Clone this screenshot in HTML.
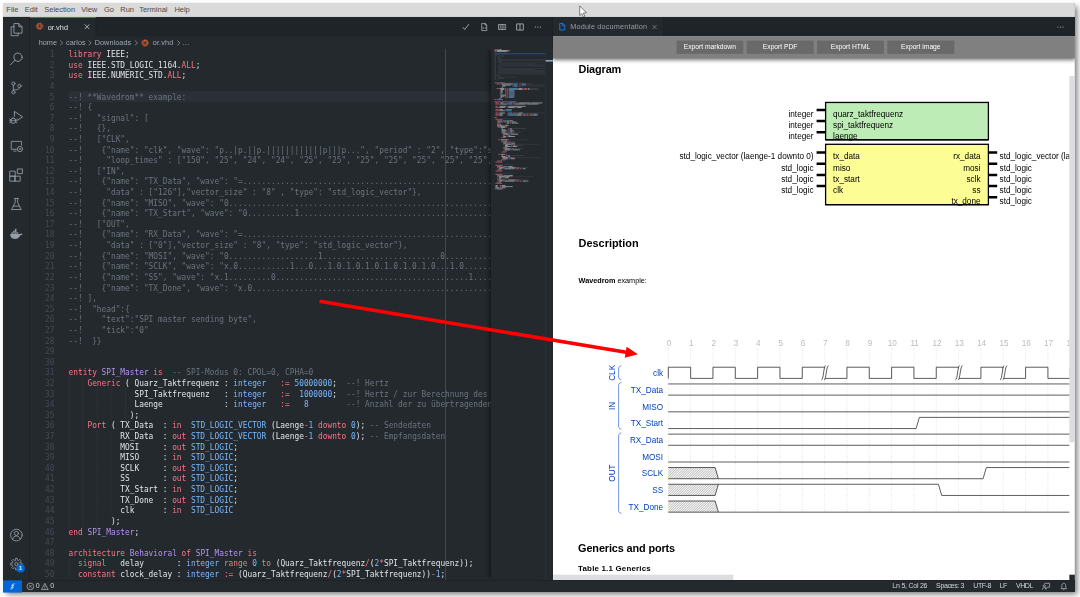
<!DOCTYPE html>
<html lang="en">
<head>
<meta charset="utf-8">
<title>or.vhd - Visual Studio Code</title>
<style>
html,body{margin:0;padding:0;background:#fff;}
body{width:1080px;height:597px;overflow:hidden;position:relative;font-family:"Liberation Sans","DejaVu Sans",sans-serif;}
#win{position:absolute;left:3px;top:3px;width:1920px;height:1054.5px;transform:scale(.5583);transform-origin:0 0;background:#24292e;box-shadow:5px 5px 10px 0 rgba(0,0,0,.5);font-size:13px;color:#d1d5da;}
#win *{box-sizing:border-box;}
.abs{position:absolute;}
.t{white-space:nowrap;line-height:16px;}
#menubar{position:absolute;left:0;top:0;width:1920px;height:25px;background:#dadada;color:#4a4a4a;font-size:13.4px;}
#menubar span{position:absolute;top:4px;line-height:16px;white-space:nowrap;}
#activity{position:absolute;left:0;top:25px;width:48px;height:1008px;background:#24292e;border-right:1px solid #1b1f23;}
#activity svg{position:absolute;left:11px;width:25px;height:25px;overflow:visible;}
#g1{position:absolute;left:48px;top:25px;width:936px;height:1008px;overflow:hidden;}
#g2{position:absolute;left:983.8px;top:25px;width:936.2px;height:1009px;overflow:hidden;border-left:1px solid #1b1f23;}
.tabs{position:absolute;left:0;top:0;width:100%;height:35px;background:#1f2428;}
.tab{position:absolute;top:0;height:35px;background:#24292e;border-right:1px solid #1b1f23;white-space:nowrap;}
#crumbs{position:absolute;left:0;top:35px;width:937px;height:22px;background:#24292e;color:#a0a8b0;font-size:13px;}
#crumbs span{position:absolute;top:3px;line-height:16px;white-space:nowrap;}
#editor{position:absolute;left:0;top:57px;width:937px;height:951px;overflow:hidden;background:#24292e;font-family:"DejaVu Sans Mono","Liberation Mono",monospace;font-size:14px;}
#lines{position:absolute;left:0;top:0;width:825.5px;height:951px;overflow:hidden;}
.ln{position:absolute;left:0;width:937px;height:19px;line-height:19px;white-space:pre;}
.ln.cur{background:linear-gradient(#2b3036,#2b3036) 69.5px 0/900px 19px no-repeat;}
.num{position:absolute;left:0;top:0.8px;width:44.2px;text-align:right;font-weight:normal;color:#424a53;}
.ln.cur .num{color:#444d56;}
.tx{position:absolute;left:69.5px;top:0.8px;height:19px;white-space:pre;}
.ig{position:absolute;top:-0.8px;width:1px;height:19px;background:#30363d;}
#ruler{position:absolute;left:744px;top:0;width:1px;height:951px;background:#5c646d;}
#minimap{position:absolute;left:825.5px;top:0;width:97.5px;height:951px;background:#24292e;box-shadow:-6px 0 6px -3px rgba(0,0,0,.45);}
#vscroll{position:absolute;left:923px;top:0;width:14px;height:951px;background:#24292e;border-left:1px solid #2f363d;}
#status{position:absolute;left:0;top:1034px;width:1920px;height:20.5px;background:#24292e;border-top:1px solid #1b1f23;color:#d1d5da;font-size:12.3px;}
#status span{position:absolute;top:3px;line-height:15px;white-space:nowrap;}
#webview{position:absolute;left:0;top:35px;width:935.2px;height:974px;background:#fff;overflow:hidden;}
#toolbar{position:absolute;left:0;top:0;width:935.2px;height:39px;background:#808080;box-shadow:0 3px 7px rgba(0,0,0,.55);}
#toolbar span{position:absolute;top:7px;width:120px;height:24px;background:#696969;color:#fff;font-size:12px;line-height:24px;text-align:center;white-space:nowrap;}
#ov{position:absolute;left:0;top:0;width:1080px;height:597px;overflow:hidden;pointer-events:none;}
#ov .h{position:absolute;white-space:nowrap;color:#000;font-weight:bold;line-height:1;}
</style>
</head>
<body>
<div id="win">
  <div id="menubar">
    <span style="left:6px">File</span><span style="left:39px">Edit</span><span style="left:74px">Selection</span><span style="left:140px">View</span><span style="left:181px">Go</span><span style="left:210px">Run</span><span style="left:244px">Terminal</span><span style="left:307px">Help</span>
  </div>
  <div id="activity">
<svg viewBox="0 0 24 24" style="left:9.9px;top:8.8px;width:27.5px;height:27.5px" fill="none" stroke="#959da5" stroke-width="1.4" stroke-linejoin="round" stroke-linecap="round"><path d="M9 2.5h7l5 5v10h-12z"/><path d="M16 2.5v5h5"/><path d="M9 7.5h-5v14h11v-4"/></svg>
<svg viewBox="0 0 24 24" style="left:9.6px;top:60.5px;width:28.0px;height:28.0px" fill="none" stroke="#959da5" stroke-width="1.4" stroke-linejoin="round" stroke-linecap="round"><circle cx="14.5" cy="9.5" r="6.3"/><path d="M10 14 2.8 21.2"/></svg>
<svg viewBox="0 0 24 24" style="left:10.6px;top:114.0px;width:26.0px;height:26.0px" fill="none" stroke="#959da5" stroke-width="1.4" stroke-linejoin="round" stroke-linecap="round"><circle cx="7" cy="5" r="2.700"/><circle cx="7" cy="19.300" r="2.700"/><circle cx="17" cy="8.800" r="2.700"/><path d="M7 7.700v8.900"/><path d="M17 11.500c0 3.200-2.500 3.700-10 3.700"/></svg>
<svg viewBox="0 0 24 24" style="left:9.6px;top:165.0px;width:28.0px;height:28.0px" fill="none" stroke="#959da5" stroke-width="1.4" stroke-linejoin="round" stroke-linecap="round"><path d="M9 11V3.500l12.500 8.500-8.500 5.500"/><rect x="3.800" y="14" width="6.800" height="7.800" rx="3"/><path d="M3.800 17.800h6.800M1.500 15.200l2.300 1.300M1.500 21l2.300-1.300M12.900 15.200l-2.300 1.300M12.900 21l-2.300-1.300M1.200 18h2.600M10.600 18h2.600" stroke-width="1.100"/></svg>
<svg viewBox="0 0 24 24" style="left:10.6px;top:218.0px;width:26.0px;height:26.0px" fill="none" stroke="#959da5" stroke-width="1.4" stroke-linejoin="round" stroke-linecap="round"><path d="M12 17.5H3.5v-13h17V11"/><path d="M7.5 20.5h4"/><circle cx="17.8" cy="17.2" r="4.4"/><path d="M16.3 15.7l3 3M19.3 15.7l-3 3" stroke-width="1.1"/></svg>
<svg viewBox="0 0 24 24" style="left:10.1px;top:269.5px;width:27.0px;height:27.0px" fill="none" stroke="#959da5" stroke-width="1.4" stroke-linejoin="round" stroke-linecap="round"><path d="M2.500 5.500h8v8h-8z"/><path d="M2.500 13.500h8v8h-8z"/><path d="M10.500 13.500h8v8h-8z"/><path d="M14.500 2h7.500v7.500h-7.500z"/></svg>
<svg viewBox="0 0 24 24" style="left:10.6px;top:322.0px;width:26.0px;height:26.0px" fill="none" stroke="#959da5" stroke-width="1.4" stroke-linejoin="round" stroke-linecap="round"><path d="M8.5 2.8h7"/><path d="M10 3v6.5l-6 11.7h16L14 9.5V3"/><path d="M6.8 15.5h10.4"/></svg>
<svg viewBox="0 0 24 24" style="top:376.5px" fill="#959da5" stroke="none"><path d="M1.5 11.5h17.2c.9-1 2.6-1.3 4-.4-.5 1.7-2 2.5-3.4 2.5-1.6 4-4.8 6.4-9.8 6.4-4.9 0-7.6-3.1-8-8.5z"/><path d="M4 8.3h2.6v2.6H4zM7 8.3h2.6v2.6H7zM10 8.3h2.6v2.6H10zM13 8.3h2.6v2.6H13zM7 5.3h2.6v2.6H7zM10 5.3h2.6v2.6H10zM10 2.3h2.6v2.6H10z"/></svg>
<svg viewBox="0 0 24 24" style="left:10.6px;top:915.0px;width:26.0px;height:26.0px" fill="none" stroke="#959da5" stroke-width="1.4" stroke-linejoin="round" stroke-linecap="round"><circle cx="12" cy="12" r="9.6"/><circle cx="12" cy="9.3" r="3.4"/><path d="M5.6 19c.8-3.6 3.2-5.4 6.4-5.4s5.6 1.8 6.4 5.4"/></svg>
<svg viewBox="0 0 24 24" style="left:10.6px;top:966.5px;width:26.0px;height:26.0px" fill="none" stroke="#959da5" stroke-width="1.4" stroke-linejoin="round" stroke-linecap="round"><circle cx="12" cy="12" r="2.700"/><path d="M10.41 5.59L10.42 2.53L13.58 2.53L13.59 5.59L15.40 6.35L17.58 4.19L19.81 6.42L17.65 8.60L18.41 10.41L21.47 10.42L21.47 13.58L18.41 13.59L17.65 15.40L19.81 17.58L17.58 19.81L15.40 17.65L13.59 18.41L13.58 21.47L10.42 21.47L10.41 18.41L8.60 17.65L6.42 19.81L4.19 17.58L6.35 15.40L5.59 13.59L2.53 13.58L2.53 10.42L5.59 10.41L6.35 8.60L4.19 6.42L6.42 4.19L8.60 6.35z" stroke-width="1.300"/></svg><div class="abs" style="left:24px;top:980.2px;width:14.5px;height:14.5px;border-radius:7.3px;background:#0366d6;color:#fff;font-size:9px;line-height:14.5px;text-align:center;font-weight:bold">1</div>
  </div>
  <div id="g1">
    <div class="tabs">
      <div class="tab" style="left:0;width:119px;border-top:1px solid #f9826c;color:#e1e4e8">
<svg class="abs" viewBox="0 0 16 16" style="left:10.5px;top:8.5px;width:13px;height:13px;overflow:visible"><circle cx="8" cy="8" r="5.7" fill="none" stroke="#e0653a" stroke-width="2"/><circle cx="8" cy="8" r="7.3" fill="none" stroke="#e0653a" stroke-width="1.5" stroke-dasharray="2 1.82"/><rect x="5.5" y="5.5" width="5" height="5" fill="none" stroke="#e0653a" stroke-width="1.2"/></svg><span class="abs t" style="left:32.0px;top:10.0px;font-size:13.00px;letter-spacing:0.182px;color:#e1e4e8;">or.vhd</span><svg class="abs" viewBox="0 0 10 10" style="left:97.3px;top:11px;width:11px;height:11px" stroke="#e1e4e8" stroke-width="1.15" fill="none"><path d="M1.2 1.2l7.6 7.6M8.8 1.2l-7.6 7.6"/></svg>
      </div>
<svg class="abs" viewBox="0 0 16 16" style="left:773.3px;top:9.5px;width:16px;height:16px" fill="none" stroke="#d1d5da" stroke-width="1.3"><path d="M2.5 8.5l3.5 4 7.5-9.5"/></svg>
<svg class="abs" viewBox="0 0 16 16" style="left:805.5px;top:9.5px;width:16px;height:16px" fill="none" stroke="#d1d5da" stroke-width="1.1"><path d="M3.5 1.5h6l3 3v10h-9z"/><path d="M9.5 1.5v3h3"/><path d="M7 8l-1.6 1.7L7 11.4M9.3 8l1.6 1.7-1.6 1.7" stroke-width="1"/></svg>
<svg class="abs" viewBox="0 0 16 16" style="left:837.8px;top:9.5px;width:16px;height:16px" fill="none" stroke="#d1d5da" stroke-width="1.1"><path d="M1.5 3.5h13v9h-13z"/><path d="M8 3.5v9"/><path d="M3.5 6h2.5M3.5 8h2.5M3.5 10h2.5M10 6h2.5M10 8h2.5M10 10h2.5" stroke-width="1"/></svg>
<svg class="abs" viewBox="0 0 16 16" style="left:870.0px;top:9.5px;width:16px;height:16px" fill="none" stroke="#d1d5da" stroke-width="1.2"><path d="M2 2.5h12v11h-12z"/><path d="M8 2.5v11"/></svg>
<svg class="abs" viewBox="0 0 16 16" style="left:901.7px;top:9.5px;width:16px;height:16px" fill="none" stroke="#d1d5da" stroke-width="1.1"><circle cx="3.5" cy="8" r="1" fill="#d1d5da" stroke="none"/><circle cx="8" cy="8" r="1" fill="#d1d5da" stroke="none"/><circle cx="12.5" cy="8" r="1" fill="#d1d5da" stroke="none"/></svg>
    </div>
    <div id="crumbs">
<span class="abs t" style="left:15.9px;top:3.0px;font-size:13.00px;letter-spacing:0.071px;">home</span>
<svg class="abs" viewBox="0 0 8 12" style="left:52.0px;top:5px;width:9px;height:13px" fill="none" stroke="#a0a8b0" stroke-width="1.1"><path d="M2 2l4.200 4-4.200 4"/></svg>
<span class="abs t" style="left:64.8px;top:3.0px;font-size:13.00px;letter-spacing:0.104px;">carlos</span>
<svg class="abs" viewBox="0 0 8 12" style="left:103.0px;top:5px;width:9px;height:13px" fill="none" stroke="#a0a8b0" stroke-width="1.1"><path d="M2 2l4.200 4-4.200 4"/></svg>
<span class="abs t" style="left:116.2px;top:3.0px;font-size:13.00px;letter-spacing:0.121px;">Downloads</span>
<svg class="abs" viewBox="0 0 8 12" style="left:185.5px;top:5px;width:9px;height:13px" fill="none" stroke="#a0a8b0" stroke-width="1.1"><path d="M2 2l4.200 4-4.200 4"/></svg>
<svg class="abs" viewBox="0 0 16 16" style="left:199.5px;top:4.5px;width:13px;height:13px;overflow:visible"><circle cx="8" cy="8" r="5.7" fill="none" stroke="#e0653a" stroke-width="2"/><circle cx="8" cy="8" r="7.3" fill="none" stroke="#e0653a" stroke-width="1.5" stroke-dasharray="2 1.82"/><rect x="5.5" y="5.5" width="5" height="5" fill="none" stroke="#e0653a" stroke-width="1.2"/></svg>
<span class="abs t" style="left:220.3px;top:3.0px;font-size:13.00px;letter-spacing:0.248px;">or.vhd</span>
<svg class="abs" viewBox="0 0 8 12" style="left:261.5px;top:5px;width:9px;height:13px" fill="none" stroke="#a0a8b0" stroke-width="1.1"><path d="M2 2l4.200 4-4.200 4"/></svg>
<span class="abs t" style="left:273.0px;top:3.0px;font-size:13.00px;">…</span>
    </div>
    <div id="editor">
      <div id="lines">
<div class="ln" style="top:0px"><b class="num">1</b><div class="tx"><span style="color:#f97583">library</span><span style="color:#e1e4e8"> IEEE;</span></div></div>
<div class="ln" style="top:19px"><b class="num">2</b><div class="tx"><span style="color:#f97583">use</span><span style="color:#e1e4e8"> IEEE.STD_LOGIC_1164.</span><span style="color:#f97583">ALL</span><span style="color:#e1e4e8">;</span></div></div>
<div class="ln" style="top:38px"><b class="num">3</b><div class="tx"><span style="color:#f97583">use</span><span style="color:#e1e4e8"> IEEE.NUMERIC_STD.</span><span style="color:#f97583">ALL</span><span style="color:#e1e4e8">;</span></div></div>
<div class="ln" style="top:57px"><b class="num">4</b><div class="tx"></div></div>
<div class="ln cur" style="top:76px"><b class="num">5</b><div class="tx"><span style="color:#6a737d">--! **Wavedrom** example:</span></div></div>
<div class="ln" style="top:95px"><b class="num">6</b><div class="tx"><span style="color:#6a737d">--! {</span></div></div>
<div class="ln" style="top:114px"><b class="num">7</b><div class="tx"><span style="color:#6a737d">--!   "signal": [</span></div></div>
<div class="ln" style="top:133px"><b class="num">8</b><div class="tx"><span style="color:#6a737d">--!   {},</span></div></div>
<div class="ln" style="top:152px"><b class="num">9</b><div class="tx"><span style="color:#6a737d">--!   ["CLK",</span></div></div>
<div class="ln" style="top:171px"><b class="num">10</b><div class="tx"><span style="color:#6a737d">--!    {"name": "clk", "wave": "p..|p.||p.||||||||||||p|||p...", "period" : "2", "type":"std_logic"},</span></div></div>
<div class="ln" style="top:190px"><b class="num">11</b><div class="tx"><span style="color:#6a737d">--!     "loop_times" : ["150", "25", "24", "24", "25", "25", "25", "25", "25", "25", "25", "25", "25"]},</span></div></div>
<div class="ln" style="top:209px"><b class="num">12</b><div class="tx"><span style="color:#6a737d">--!   ["IN",</span></div></div>
<div class="ln" style="top:228px"><b class="num">13</b><div class="tx"><span style="color:#6a737d">--!    {"name": "TX_Data", "wave": "=................................................................................</span></div></div>
<div class="ln" style="top:247px"><b class="num">14</b><div class="tx"><span style="color:#6a737d">--!     "data" : ["126"],"vector_size" : "8" , "type": "std_logic_vector"},</span></div></div>
<div class="ln" style="top:266px"><b class="num">15</b><div class="tx"><span style="color:#6a737d">--!    {"name": "MISO", "wave": "0................................................................................</span></div></div>
<div class="ln" style="top:285px"><b class="num">16</b><div class="tx"><span style="color:#6a737d">--!    {"name": "TX_Start", "wave": "0..........1................................................................................</span></div></div>
<div class="ln" style="top:304px"><b class="num">17</b><div class="tx"><span style="color:#6a737d">--!   ["OUT",</span></div></div>
<div class="ln" style="top:323px"><b class="num">18</b><div class="tx"><span style="color:#6a737d">--!    {"name": "RX_Data", "wave": "=................................................................................</span></div></div>
<div class="ln" style="top:342px"><b class="num">19</b><div class="tx"><span style="color:#6a737d">--!     "data" : ["0"],"vector_size" : "8", "type": "std_logic_vector"},</span></div></div>
<div class="ln" style="top:361px"><b class="num">20</b><div class="tx"><span style="color:#6a737d">--!    {"name": "MOSI", "wave": "0...................1.........................0................................................................................</span></div></div>
<div class="ln" style="top:380px"><b class="num">21</b><div class="tx"><span style="color:#6a737d">--!    {"name": "SCLK", "wave": "x.0...........1...0...1.0.1.0.1.0.1.0.1.0.1.0...1.0................................................................................</span></div></div>
<div class="ln" style="top:399px"><b class="num">22</b><div class="tx"><span style="color:#6a737d">--!    {"name": "SS", "wave": "x.1.........0.........................................1................................................................................</span></div></div>
<div class="ln" style="top:418px"><b class="num">23</b><div class="tx"><span style="color:#6a737d">--!    {"name": "TX_Done", "wave": "x.0................................................................................</span></div></div>
<div class="ln" style="top:437px"><b class="num">24</b><div class="tx"><span style="color:#6a737d">--! ],</span></div></div>
<div class="ln" style="top:456px"><b class="num">25</b><div class="tx"><span style="color:#6a737d">--!  "head":{</span></div></div>
<div class="ln" style="top:475px"><b class="num">26</b><div class="tx"><span style="color:#6a737d">--!    "text":"SPI master sending byte",</span></div></div>
<div class="ln" style="top:494px"><b class="num">27</b><div class="tx"><span style="color:#6a737d">--!    "tick":"0"</span></div></div>
<div class="ln" style="top:513px"><b class="num">28</b><div class="tx"><span style="color:#6a737d">--!  }}</span></div></div>
<div class="ln" style="top:532px"><b class="num">29</b><div class="tx"></div></div>
<div class="ln" style="top:551px"><b class="num">30</b><div class="tx"></div></div>
<div class="ln" style="top:570px"><b class="num">31</b><div class="tx"><span style="color:#f97583">entity</span><span style="color:#b392f0"> SPI_Master </span><span style="color:#f97583">is</span><span style="color:#6a737d">  -- SPI-Modus 0: CPOL=0, CPHA=0</span></div></div>
<div class="ln" style="top:589px"><b class="num">32</b><div class="tx"><i class="ig" style="left:0.00px"></i><i class="ig" style="left:25.29px"></i><span style="color:#f97583">    Generic</span><span style="color:#e1e4e8"> ( Quarz_Taktfrequenz : </span><span style="color:#79b8ff">integer</span><span style="color:#f97583">   := </span><span style="color:#79b8ff">50000000</span><span style="color:#e1e4e8">;</span><span style="color:#6a737d">  --! Hertz</span></div></div>
<div class="ln" style="top:608px"><b class="num">33</b><div class="tx"><i class="ig" style="left:0.00px"></i><i class="ig" style="left:25.29px"></i><i class="ig" style="left:50.58px"></i><i class="ig" style="left:75.87px"></i><i class="ig" style="left:101.16px"></i><span style="color:#e1e4e8">              SPI_Taktfrequenz   : </span><span style="color:#79b8ff">integer</span><span style="color:#f97583">   :=  </span><span style="color:#79b8ff">1000000</span><span style="color:#e1e4e8">;</span><span style="color:#6a737d">  --! Hertz / zur Berechnung des Taktes</span></div></div>
<div class="ln" style="top:627px"><b class="num">34</b><div class="tx"><i class="ig" style="left:0.00px"></i><i class="ig" style="left:25.29px"></i><i class="ig" style="left:50.58px"></i><i class="ig" style="left:75.87px"></i><i class="ig" style="left:101.16px"></i><span style="color:#e1e4e8">              Laenge             : </span><span style="color:#79b8ff">integer</span><span style="color:#f97583">   :=   </span><span style="color:#79b8ff">8</span><span style="color:#6a737d">        --! Anzahl der zu übertragenden Bits</span></div></div>
<div class="ln" style="top:646px"><b class="num">35</b><div class="tx"><i class="ig" style="left:0.00px"></i><i class="ig" style="left:25.29px"></i><i class="ig" style="left:50.58px"></i><i class="ig" style="left:75.87px"></i><i class="ig" style="left:101.16px"></i><span style="color:#e1e4e8">             );</span></div></div>
<div class="ln" style="top:665px"><b class="num">36</b><div class="tx"><i class="ig" style="left:0.00px"></i><i class="ig" style="left:25.29px"></i><span style="color:#f97583">    Port</span><span style="color:#e1e4e8"> ( TX_Data  : </span><span style="color:#f97583">in  </span><span style="color:#79b8ff">STD_LOGIC_VECTOR</span><span style="color:#e1e4e8"> (Laenge</span><span style="color:#f97583">-</span><span style="color:#79b8ff">1</span><span style="color:#f97583"> downto </span><span style="color:#79b8ff">0</span><span style="color:#e1e4e8">);</span><span style="color:#6a737d"> -- Sendedaten</span></div></div>
<div class="ln" style="top:684px"><b class="num">37</b><div class="tx"><i class="ig" style="left:0.00px"></i><i class="ig" style="left:25.29px"></i><i class="ig" style="left:50.58px"></i><i class="ig" style="left:75.87px"></i><span style="color:#e1e4e8">           RX_Data  : </span><span style="color:#f97583">out </span><span style="color:#79b8ff">STD_LOGIC_VECTOR</span><span style="color:#e1e4e8"> (Laenge</span><span style="color:#f97583">-</span><span style="color:#79b8ff">1</span><span style="color:#f97583"> downto </span><span style="color:#79b8ff">0</span><span style="color:#e1e4e8">);</span><span style="color:#6a737d"> -- Empfangsdaten</span></div></div>
<div class="ln" style="top:703px"><b class="num">38</b><div class="tx"><i class="ig" style="left:0.00px"></i><i class="ig" style="left:25.29px"></i><i class="ig" style="left:50.58px"></i><i class="ig" style="left:75.87px"></i><span style="color:#e1e4e8">           MOSI     : </span><span style="color:#f97583">out </span><span style="color:#79b8ff">STD_LOGIC</span><span style="color:#e1e4e8">;</span></div></div>
<div class="ln" style="top:722px"><b class="num">39</b><div class="tx"><i class="ig" style="left:0.00px"></i><i class="ig" style="left:25.29px"></i><i class="ig" style="left:50.58px"></i><i class="ig" style="left:75.87px"></i><span style="color:#e1e4e8">           MISO     : </span><span style="color:#f97583">in  </span><span style="color:#79b8ff">STD_LOGIC</span><span style="color:#e1e4e8">;</span></div></div>
<div class="ln" style="top:741px"><b class="num">40</b><div class="tx"><i class="ig" style="left:0.00px"></i><i class="ig" style="left:25.29px"></i><i class="ig" style="left:50.58px"></i><i class="ig" style="left:75.87px"></i><span style="color:#e1e4e8">           SCLK     : </span><span style="color:#f97583">out </span><span style="color:#79b8ff">STD_LOGIC</span><span style="color:#e1e4e8">;</span></div></div>
<div class="ln" style="top:760px"><b class="num">41</b><div class="tx"><i class="ig" style="left:0.00px"></i><i class="ig" style="left:25.29px"></i><i class="ig" style="left:50.58px"></i><i class="ig" style="left:75.87px"></i><span style="color:#e1e4e8">           SS       : </span><span style="color:#f97583">out </span><span style="color:#79b8ff">STD_LOGIC</span><span style="color:#e1e4e8">;</span></div></div>
<div class="ln" style="top:779px"><b class="num">42</b><div class="tx"><i class="ig" style="left:0.00px"></i><i class="ig" style="left:25.29px"></i><i class="ig" style="left:50.58px"></i><i class="ig" style="left:75.87px"></i><span style="color:#e1e4e8">           TX_Start : </span><span style="color:#f97583">in  </span><span style="color:#79b8ff">STD_LOGIC</span><span style="color:#e1e4e8">;</span></div></div>
<div class="ln" style="top:798px"><b class="num">43</b><div class="tx"><i class="ig" style="left:0.00px"></i><i class="ig" style="left:25.29px"></i><i class="ig" style="left:50.58px"></i><i class="ig" style="left:75.87px"></i><span style="color:#e1e4e8">           TX_Done  : </span><span style="color:#f97583">out </span><span style="color:#79b8ff">STD_LOGIC</span><span style="color:#e1e4e8">;</span></div></div>
<div class="ln" style="top:817px"><b class="num">44</b><div class="tx"><i class="ig" style="left:0.00px"></i><i class="ig" style="left:25.29px"></i><i class="ig" style="left:50.58px"></i><i class="ig" style="left:75.87px"></i><span style="color:#e1e4e8">           clk      : </span><span style="color:#f97583">in  </span><span style="color:#79b8ff">STD_LOGIC</span><span style="color:#e1e4e8"></span></div></div>
<div class="ln" style="top:836px"><b class="num">45</b><div class="tx"><i class="ig" style="left:0.00px"></i><i class="ig" style="left:25.29px"></i><i class="ig" style="left:50.58px"></i><span style="color:#e1e4e8">         );</span></div></div>
<div class="ln" style="top:855px"><b class="num">46</b><div class="tx"><span style="color:#f97583">end</span><span style="color:#b392f0"> SPI_Master</span><span style="color:#e1e4e8">;</span></div></div>
<div class="ln" style="top:874px"><b class="num">47</b><div class="tx"></div></div>
<div class="ln" style="top:893px"><b class="num">48</b><div class="tx"><span style="color:#f97583">architecture</span><span style="color:#b392f0"> Behavioral </span><span style="color:#f97583">of</span><span style="color:#b392f0"> SPI_Master </span><span style="color:#f97583">is</span></div></div>
<div class="ln" style="top:912px"><b class="num">49</b><div class="tx"><i class="ig" style="left:0.00px"></i><span style="color:#f97583">  signal</span><span style="color:#e1e4e8">   delay       : </span><span style="color:#79b8ff">integer</span><span style="color:#f97583"> range </span><span style="color:#79b8ff">0</span><span style="color:#f97583"> to</span><span style="color:#e1e4e8"> (Quarz_Taktfrequenz</span><span style="color:#f97583">/</span><span style="color:#e1e4e8">(</span><span style="color:#79b8ff">2</span><span style="color:#f97583">*</span><span style="color:#e1e4e8">SPI_Taktfrequenz));</span></div></div>
<div class="ln" style="top:931px"><b class="num">50</b><div class="tx"><i class="ig" style="left:0.00px"></i><span style="color:#f97583">  constant</span><span style="color:#e1e4e8"> clock_delay : </span><span style="color:#79b8ff">integer</span><span style="color:#f97583"> := </span><span style="color:#e1e4e8">(Quarz_Taktfrequenz</span><span style="color:#f97583">/</span><span style="color:#e1e4e8">(</span><span style="color:#79b8ff">2</span><span style="color:#f97583">*</span><span style="color:#e1e4e8">SPI_Taktfrequenz))</span><span style="color:#f97583">-</span><span style="color:#79b8ff">1</span><span style="color:#e1e4e8">;</span></div></div>
      </div>
      <div id="ruler"></div>
      <div id="minimap">
<svg class="abs" style="left:6px;top:0;width:91.5px;height:300px" viewBox="0 0 91.5 300">
<rect x="-6" y="8.3" width="97.5" height="1.4" fill="#2a5a8c"/>
<rect x="0" y="0.2" width="7" height="1.6" fill="#f97583" opacity="0.6"/>
<rect x="8" y="0.2" width="5" height="1.6" fill="#e1e4e8" opacity="0.6"/>
<rect x="0" y="2.2" width="3" height="1.6" fill="#f97583" opacity="0.6"/>
<rect x="4" y="2.2" width="20" height="1.6" fill="#e1e4e8" opacity="0.6"/>
<rect x="24" y="2.2" width="3" height="1.6" fill="#f97583" opacity="0.6"/>
<rect x="27" y="2.2" width="1" height="1.6" fill="#e1e4e8" opacity="0.6"/>
<rect x="0" y="4.2" width="3" height="1.6" fill="#f97583" opacity="0.6"/>
<rect x="4" y="4.2" width="17" height="1.6" fill="#e1e4e8" opacity="0.6"/>
<rect x="21" y="4.2" width="3" height="1.6" fill="#f97583" opacity="0.6"/>
<rect x="24" y="4.2" width="1" height="1.6" fill="#e1e4e8" opacity="0.6"/>
<rect x="0" y="8.2" width="25" height="1.6" fill="#6a737d" opacity="0.2"/>
<rect x="0" y="10.2" width="5" height="1.6" fill="#6a737d" opacity="0.32"/>
<rect x="0" y="12.2" width="3" height="1.6" fill="#6a737d" opacity="0.32"/>
<rect x="6" y="12.2" width="11" height="1.6" fill="#6a737d" opacity="0.32"/>
<rect x="0" y="14.2" width="3" height="1.6" fill="#6a737d" opacity="0.32"/>
<rect x="6" y="14.2" width="3" height="1.6" fill="#6a737d" opacity="0.32"/>
<rect x="0" y="16.2" width="3" height="1.6" fill="#6a737d" opacity="0.32"/>
<rect x="6" y="16.2" width="7" height="1.6" fill="#6a737d" opacity="0.32"/>
<rect x="0" y="18.2" width="3" height="1.6" fill="#6a737d" opacity="0.32"/>
<rect x="7" y="18.2" width="84.5" height="1.6" fill="#6a737d" opacity="0.2"/>
<rect x="0" y="20.2" width="3" height="1.6" fill="#6a737d" opacity="0.32"/>
<rect x="8" y="20.2" width="83.5" height="1.6" fill="#6a737d" opacity="0.2"/>
<rect x="0" y="22.2" width="3" height="1.6" fill="#6a737d" opacity="0.32"/>
<rect x="6" y="22.2" width="6" height="1.6" fill="#6a737d" opacity="0.32"/>
<rect x="0" y="24.2" width="3" height="1.6" fill="#6a737d" opacity="0.32"/>
<rect x="7" y="24.2" width="84.5" height="1.6" fill="#6a737d" opacity="0.2"/>
<rect x="0" y="26.2" width="3" height="1.6" fill="#6a737d" opacity="0.32"/>
<rect x="8" y="26.2" width="67" height="1.6" fill="#6a737d" opacity="0.2"/>
<rect x="0" y="28.2" width="3" height="1.6" fill="#6a737d" opacity="0.32"/>
<rect x="7" y="28.2" width="84.5" height="1.6" fill="#6a737d" opacity="0.2"/>
<rect x="0" y="30.2" width="3" height="1.6" fill="#6a737d" opacity="0.32"/>
<rect x="7" y="30.2" width="84.5" height="1.6" fill="#6a737d" opacity="0.2"/>
<rect x="0" y="32.2" width="3" height="1.6" fill="#6a737d" opacity="0.32"/>
<rect x="6" y="32.2" width="7" height="1.6" fill="#6a737d" opacity="0.32"/>
<rect x="0" y="34.2" width="3" height="1.6" fill="#6a737d" opacity="0.32"/>
<rect x="7" y="34.2" width="84.5" height="1.6" fill="#6a737d" opacity="0.2"/>
<rect x="0" y="36.2" width="3" height="1.6" fill="#6a737d" opacity="0.32"/>
<rect x="8" y="36.2" width="64" height="1.6" fill="#6a737d" opacity="0.2"/>
<rect x="0" y="38.2" width="3" height="1.6" fill="#6a737d" opacity="0.32"/>
<rect x="7" y="38.2" width="84.5" height="1.6" fill="#6a737d" opacity="0.2"/>
<rect x="0" y="40.2" width="3" height="1.6" fill="#6a737d" opacity="0.32"/>
<rect x="7" y="40.2" width="84.5" height="1.6" fill="#6a737d" opacity="0.2"/>
<rect x="0" y="42.2" width="3" height="1.6" fill="#6a737d" opacity="0.32"/>
<rect x="7" y="42.2" width="84.5" height="1.6" fill="#6a737d" opacity="0.2"/>
<rect x="0" y="44.2" width="3" height="1.6" fill="#6a737d" opacity="0.32"/>
<rect x="7" y="44.2" width="84.5" height="1.6" fill="#6a737d" opacity="0.2"/>
<rect x="0" y="46.2" width="6" height="1.6" fill="#6a737d" opacity="0.32"/>
<rect x="0" y="48.2" width="3" height="1.6" fill="#6a737d" opacity="0.32"/>
<rect x="5" y="48.2" width="8" height="1.6" fill="#6a737d" opacity="0.32"/>
<rect x="0" y="50.2" width="3" height="1.6" fill="#6a737d" opacity="0.32"/>
<rect x="7" y="50.2" width="33" height="1.6" fill="#6a737d" opacity="0.2"/>
<rect x="0" y="52.2" width="3" height="1.6" fill="#6a737d" opacity="0.32"/>
<rect x="7" y="52.2" width="10" height="1.6" fill="#6a737d" opacity="0.32"/>
<rect x="0" y="54.2" width="3" height="1.6" fill="#6a737d" opacity="0.32"/>
<rect x="5" y="54.2" width="2" height="1.6" fill="#6a737d" opacity="0.32"/>
<rect x="0" y="60.2" width="6" height="1.6" fill="#f97583" opacity="0.6"/>
<rect x="7" y="60.2" width="10" height="1.6" fill="#b392f0" opacity="0.6"/>
<rect x="18" y="60.2" width="2" height="1.6" fill="#f97583" opacity="0.6"/>
<rect x="22" y="60.2" width="30" height="1.6" fill="#6a737d" opacity="0.2"/>
<rect x="4" y="62.2" width="7" height="1.6" fill="#f97583" opacity="0.6"/>
<rect x="12" y="62.2" width="22" height="1.6" fill="#e1e4e8" opacity="0.6"/>
<rect x="35" y="62.2" width="7" height="1.6" fill="#79b8ff" opacity="0.6"/>
<rect x="45" y="62.2" width="2" height="1.6" fill="#f97583" opacity="0.6"/>
<rect x="48" y="62.2" width="8" height="1.6" fill="#79b8ff" opacity="0.6"/>
<rect x="56" y="62.2" width="1" height="1.6" fill="#e1e4e8" opacity="0.6"/>
<rect x="59" y="62.2" width="9" height="1.6" fill="#6a737d" opacity="0.32"/>
<rect x="14" y="64.2" width="16" height="1.6" fill="#e1e4e8" opacity="0.6"/>
<rect x="33" y="64.2" width="1" height="1.6" fill="#e1e4e8" opacity="0.6"/>
<rect x="35" y="64.2" width="7" height="1.6" fill="#79b8ff" opacity="0.6"/>
<rect x="45" y="64.2" width="2" height="1.6" fill="#f97583" opacity="0.6"/>
<rect x="49" y="64.2" width="7" height="1.6" fill="#79b8ff" opacity="0.6"/>
<rect x="56" y="64.2" width="1" height="1.6" fill="#e1e4e8" opacity="0.6"/>
<rect x="59" y="64.2" width="32.5" height="1.6" fill="#6a737d" opacity="0.2"/>
<rect x="14" y="66.2" width="6" height="1.6" fill="#e1e4e8" opacity="0.6"/>
<rect x="33" y="66.2" width="1" height="1.6" fill="#e1e4e8" opacity="0.6"/>
<rect x="35" y="66.2" width="7" height="1.6" fill="#79b8ff" opacity="0.6"/>
<rect x="45" y="66.2" width="2" height="1.6" fill="#f97583" opacity="0.6"/>
<rect x="50" y="66.2" width="1" height="1.6" fill="#79b8ff" opacity="0.6"/>
<rect x="59" y="66.2" width="32.5" height="1.6" fill="#6a737d" opacity="0.2"/>
<rect x="13" y="68.2" width="2" height="1.6" fill="#e1e4e8" opacity="0.6"/>
<rect x="4" y="70.2" width="4" height="1.6" fill="#f97583" opacity="0.6"/>
<rect x="9" y="70.2" width="9" height="1.6" fill="#e1e4e8" opacity="0.6"/>
<rect x="20" y="70.2" width="1" height="1.6" fill="#e1e4e8" opacity="0.6"/>
<rect x="22" y="70.2" width="2" height="1.6" fill="#f97583" opacity="0.6"/>
<rect x="26" y="70.2" width="16" height="1.6" fill="#79b8ff" opacity="0.6"/>
<rect x="43" y="70.2" width="7" height="1.6" fill="#e1e4e8" opacity="0.6"/>
<rect x="50" y="70.2" width="1" height="1.6" fill="#f97583" opacity="0.6"/>
<rect x="51" y="70.2" width="1" height="1.6" fill="#79b8ff" opacity="0.6"/>
<rect x="53" y="70.2" width="6" height="1.6" fill="#f97583" opacity="0.6"/>
<rect x="60" y="70.2" width="1" height="1.6" fill="#79b8ff" opacity="0.6"/>
<rect x="61" y="70.2" width="2" height="1.6" fill="#e1e4e8" opacity="0.6"/>
<rect x="64" y="70.2" width="13" height="1.6" fill="#6a737d" opacity="0.32"/>
<rect x="11" y="72.2" width="7" height="1.6" fill="#e1e4e8" opacity="0.6"/>
<rect x="20" y="72.2" width="1" height="1.6" fill="#e1e4e8" opacity="0.6"/>
<rect x="22" y="72.2" width="3" height="1.6" fill="#f97583" opacity="0.6"/>
<rect x="26" y="72.2" width="16" height="1.6" fill="#79b8ff" opacity="0.6"/>
<rect x="43" y="72.2" width="7" height="1.6" fill="#e1e4e8" opacity="0.6"/>
<rect x="50" y="72.2" width="1" height="1.6" fill="#f97583" opacity="0.6"/>
<rect x="51" y="72.2" width="1" height="1.6" fill="#79b8ff" opacity="0.6"/>
<rect x="53" y="72.2" width="6" height="1.6" fill="#f97583" opacity="0.6"/>
<rect x="60" y="72.2" width="1" height="1.6" fill="#79b8ff" opacity="0.6"/>
<rect x="61" y="72.2" width="2" height="1.6" fill="#e1e4e8" opacity="0.6"/>
<rect x="64" y="72.2" width="16" height="1.6" fill="#6a737d" opacity="0.32"/>
<rect x="11" y="74.2" width="4" height="1.6" fill="#e1e4e8" opacity="0.6"/>
<rect x="20" y="74.2" width="1" height="1.6" fill="#e1e4e8" opacity="0.6"/>
<rect x="22" y="74.2" width="3" height="1.6" fill="#f97583" opacity="0.6"/>
<rect x="26" y="74.2" width="9" height="1.6" fill="#79b8ff" opacity="0.6"/>
<rect x="35" y="74.2" width="1" height="1.6" fill="#e1e4e8" opacity="0.6"/>
<rect x="11" y="76.2" width="4" height="1.6" fill="#e1e4e8" opacity="0.6"/>
<rect x="20" y="76.2" width="1" height="1.6" fill="#e1e4e8" opacity="0.6"/>
<rect x="22" y="76.2" width="2" height="1.6" fill="#f97583" opacity="0.6"/>
<rect x="26" y="76.2" width="9" height="1.6" fill="#79b8ff" opacity="0.6"/>
<rect x="35" y="76.2" width="1" height="1.6" fill="#e1e4e8" opacity="0.6"/>
<rect x="11" y="78.2" width="4" height="1.6" fill="#e1e4e8" opacity="0.6"/>
<rect x="20" y="78.2" width="1" height="1.6" fill="#e1e4e8" opacity="0.6"/>
<rect x="22" y="78.2" width="3" height="1.6" fill="#f97583" opacity="0.6"/>
<rect x="26" y="78.2" width="9" height="1.6" fill="#79b8ff" opacity="0.6"/>
<rect x="35" y="78.2" width="1" height="1.6" fill="#e1e4e8" opacity="0.6"/>
<rect x="11" y="80.2" width="2" height="1.6" fill="#e1e4e8" opacity="0.6"/>
<rect x="20" y="80.2" width="1" height="1.6" fill="#e1e4e8" opacity="0.6"/>
<rect x="22" y="80.2" width="3" height="1.6" fill="#f97583" opacity="0.6"/>
<rect x="26" y="80.2" width="9" height="1.6" fill="#79b8ff" opacity="0.6"/>
<rect x="35" y="80.2" width="1" height="1.6" fill="#e1e4e8" opacity="0.6"/>
<rect x="11" y="82.2" width="10" height="1.6" fill="#e1e4e8" opacity="0.6"/>
<rect x="22" y="82.2" width="2" height="1.6" fill="#f97583" opacity="0.6"/>
<rect x="26" y="82.2" width="9" height="1.6" fill="#79b8ff" opacity="0.6"/>
<rect x="35" y="82.2" width="1" height="1.6" fill="#e1e4e8" opacity="0.6"/>
<rect x="11" y="84.2" width="7" height="1.6" fill="#e1e4e8" opacity="0.6"/>
<rect x="20" y="84.2" width="1" height="1.6" fill="#e1e4e8" opacity="0.6"/>
<rect x="22" y="84.2" width="3" height="1.6" fill="#f97583" opacity="0.6"/>
<rect x="26" y="84.2" width="9" height="1.6" fill="#79b8ff" opacity="0.6"/>
<rect x="35" y="84.2" width="1" height="1.6" fill="#e1e4e8" opacity="0.6"/>
<rect x="11" y="86.2" width="3" height="1.6" fill="#e1e4e8" opacity="0.6"/>
<rect x="20" y="86.2" width="1" height="1.6" fill="#e1e4e8" opacity="0.6"/>
<rect x="22" y="86.2" width="2" height="1.6" fill="#f97583" opacity="0.6"/>
<rect x="26" y="86.2" width="9" height="1.6" fill="#79b8ff" opacity="0.6"/>
<rect x="9" y="88.2" width="2" height="1.6" fill="#e1e4e8" opacity="0.6"/>
<rect x="0" y="90.2" width="3" height="1.6" fill="#f97583" opacity="0.6"/>
<rect x="4" y="90.2" width="10" height="1.6" fill="#b392f0" opacity="0.6"/>
<rect x="14" y="90.2" width="1" height="1.6" fill="#e1e4e8" opacity="0.6"/>
<rect x="0" y="94.2" width="12" height="1.6" fill="#f97583" opacity="0.6"/>
<rect x="13" y="94.2" width="10" height="1.6" fill="#b392f0" opacity="0.6"/>
<rect x="24" y="94.2" width="2" height="1.6" fill="#f97583" opacity="0.6"/>
<rect x="27" y="94.2" width="10" height="1.6" fill="#b392f0" opacity="0.6"/>
<rect x="38" y="94.2" width="2" height="1.6" fill="#f97583" opacity="0.6"/>
<rect x="2" y="96.2" width="6" height="1.6" fill="#f97583" opacity="0.6"/>
<rect x="11" y="96.2" width="5" height="1.6" fill="#e1e4e8" opacity="0.6"/>
<rect x="23" y="96.2" width="1" height="1.6" fill="#e1e4e8" opacity="0.6"/>
<rect x="25" y="96.2" width="7" height="1.6" fill="#79b8ff" opacity="0.6"/>
<rect x="33" y="96.2" width="5" height="1.6" fill="#f97583" opacity="0.6"/>
<rect x="39" y="96.2" width="1" height="1.6" fill="#79b8ff" opacity="0.6"/>
<rect x="41" y="96.2" width="2" height="1.6" fill="#f97583" opacity="0.6"/>
<rect x="44" y="96.2" width="19" height="1.6" fill="#e1e4e8" opacity="0.6"/>
<rect x="63" y="96.2" width="1" height="1.6" fill="#f97583" opacity="0.6"/>
<rect x="64" y="96.2" width="1" height="1.6" fill="#e1e4e8" opacity="0.6"/>
<rect x="65" y="96.2" width="1" height="1.6" fill="#79b8ff" opacity="0.6"/>
<rect x="66" y="96.2" width="1" height="1.6" fill="#f97583" opacity="0.6"/>
<rect x="67" y="96.2" width="19" height="1.6" fill="#e1e4e8" opacity="0.6"/>
<rect x="2" y="98.2" width="8" height="1.6" fill="#f97583" opacity="0.6"/>
<rect x="11" y="98.2" width="13" height="1.6" fill="#e1e4e8" opacity="0.6"/>
<rect x="25" y="98.2" width="7" height="1.6" fill="#79b8ff" opacity="0.6"/>
<rect x="33" y="98.2" width="2" height="1.6" fill="#f97583" opacity="0.6"/>
<rect x="36" y="98.2" width="19" height="1.6" fill="#e1e4e8" opacity="0.6"/>
<rect x="55" y="98.2" width="1" height="1.6" fill="#f97583" opacity="0.6"/>
<rect x="56" y="98.2" width="1" height="1.6" fill="#e1e4e8" opacity="0.6"/>
<rect x="57" y="98.2" width="1" height="1.6" fill="#79b8ff" opacity="0.6"/>
<rect x="58" y="98.2" width="1" height="1.6" fill="#f97583" opacity="0.6"/>
<rect x="59" y="98.2" width="18" height="1.6" fill="#e1e4e8" opacity="0.6"/>
<rect x="77" y="98.2" width="1" height="1.6" fill="#f97583" opacity="0.6"/>
<rect x="78" y="98.2" width="1" height="1.6" fill="#79b8ff" opacity="0.6"/>
<rect x="79" y="98.2" width="1" height="1.6" fill="#e1e4e8" opacity="0.6"/>
<rect x="2" y="102.2" width="4" height="1.6" fill="#f97583" opacity="0.6"/>
<rect x="9" y="102.2" width="12" height="1.6" fill="#e1e4e8" opacity="0.6"/>
<rect x="22" y="102.2" width="2" height="1.6" fill="#f97583" opacity="0.6"/>
<rect x="25" y="102.2" width="31" height="1.6" fill="#e1e4e8" opacity="0.6"/>
<rect x="2" y="104.2" width="6" height="1.6" fill="#f97583" opacity="0.6"/>
<rect x="9" y="104.2" width="10" height="1.6" fill="#e1e4e8" opacity="0.6"/>
<rect x="23" y="104.2" width="1" height="1.6" fill="#f97583" opacity="0.6"/>
<rect x="25" y="104.2" width="12" height="1.6" fill="#e1e4e8" opacity="0.6"/>
<rect x="38" y="104.2" width="2" height="1.6" fill="#f97583" opacity="0.6"/>
<rect x="41" y="104.2" width="8" height="1.6" fill="#e1e4e8" opacity="0.6"/>
<rect x="2" y="108.2" width="6" height="1.6" fill="#f97583" opacity="0.6"/>
<rect x="9" y="108.2" width="6" height="1.6" fill="#e1e4e8" opacity="0.6"/>
<rect x="19" y="108.2" width="1" height="1.6" fill="#f97583" opacity="0.6"/>
<rect x="21" y="108.2" width="9" height="1.6" fill="#79b8ff" opacity="0.6"/>
<rect x="30" y="108.2" width="1" height="1.6" fill="#e1e4e8" opacity="0.6"/>
<rect x="2" y="110.2" width="6" height="1.6" fill="#f97583" opacity="0.6"/>
<rect x="9" y="110.2" width="10" height="1.6" fill="#e1e4e8" opacity="0.6"/>
<rect x="19" y="110.2" width="1" height="1.6" fill="#f97583" opacity="0.6"/>
<rect x="21" y="110.2" width="9" height="1.6" fill="#79b8ff" opacity="0.6"/>
<rect x="30" y="110.2" width="1" height="1.6" fill="#e1e4e8" opacity="0.6"/>
<rect x="2" y="114.2" width="6" height="1.6" fill="#f97583" opacity="0.6"/>
<rect x="9" y="114.2" width="10" height="1.6" fill="#e1e4e8" opacity="0.6"/>
<rect x="23" y="114.2" width="1" height="1.6" fill="#f97583" opacity="0.6"/>
<rect x="25" y="114.2" width="7" height="1.6" fill="#79b8ff" opacity="0.6"/>
<rect x="33" y="114.2" width="5" height="1.6" fill="#f97583" opacity="0.6"/>
<rect x="39" y="114.2" width="1" height="1.6" fill="#79b8ff" opacity="0.6"/>
<rect x="41" y="114.2" width="2" height="1.6" fill="#f97583" opacity="0.6"/>
<rect x="44" y="114.2" width="7" height="1.6" fill="#e1e4e8" opacity="0.6"/>
<rect x="52" y="114.2" width="39.5" height="1.6" fill="#6a737d" opacity="0.2"/>
<rect x="2" y="116.2" width="6" height="1.6" fill="#f97583" opacity="0.6"/>
<rect x="9" y="116.2" width="6" height="1.6" fill="#e1e4e8" opacity="0.6"/>
<rect x="23" y="116.2" width="1" height="1.6" fill="#f97583" opacity="0.6"/>
<rect x="25" y="116.2" width="16" height="1.6" fill="#79b8ff" opacity="0.6"/>
<rect x="41" y="116.2" width="7" height="1.6" fill="#e1e4e8" opacity="0.6"/>
<rect x="48" y="116.2" width="1" height="1.6" fill="#f97583" opacity="0.6"/>
<rect x="49" y="116.2" width="1" height="1.6" fill="#79b8ff" opacity="0.6"/>
<rect x="51" y="116.2" width="6" height="1.6" fill="#f97583" opacity="0.6"/>
<rect x="58" y="116.2" width="1" height="1.6" fill="#79b8ff" opacity="0.6"/>
<rect x="59" y="116.2" width="1" height="1.6" fill="#e1e4e8" opacity="0.6"/>
<rect x="61" y="116.2" width="2" height="1.6" fill="#f97583" opacity="0.6"/>
<rect x="64" y="116.2" width="1" height="1.6" fill="#e1e4e8" opacity="0.6"/>
<rect x="65" y="116.2" width="6" height="1.6" fill="#f97583" opacity="0.6"/>
<rect x="71" y="116.2" width="3" height="1.6" fill="#e1e4e8" opacity="0.6"/>
<rect x="74" y="116.2" width="4" height="1.6" fill="#79b8ff" opacity="0.6"/>
<rect x="2" y="118.2" width="6" height="1.6" fill="#f97583" opacity="0.6"/>
<rect x="9" y="118.2" width="6" height="1.6" fill="#e1e4e8" opacity="0.6"/>
<rect x="23" y="118.2" width="1" height="1.6" fill="#f97583" opacity="0.6"/>
<rect x="25" y="118.2" width="16" height="1.6" fill="#79b8ff" opacity="0.6"/>
<rect x="41" y="118.2" width="7" height="1.6" fill="#e1e4e8" opacity="0.6"/>
<rect x="48" y="118.2" width="1" height="1.6" fill="#f97583" opacity="0.6"/>
<rect x="49" y="118.2" width="1" height="1.6" fill="#79b8ff" opacity="0.6"/>
<rect x="51" y="118.2" width="6" height="1.6" fill="#f97583" opacity="0.6"/>
<rect x="58" y="118.2" width="1" height="1.6" fill="#79b8ff" opacity="0.6"/>
<rect x="59" y="118.2" width="1" height="1.6" fill="#e1e4e8" opacity="0.6"/>
<rect x="61" y="118.2" width="2" height="1.6" fill="#f97583" opacity="0.6"/>
<rect x="64" y="118.2" width="1" height="1.6" fill="#e1e4e8" opacity="0.6"/>
<rect x="65" y="118.2" width="6" height="1.6" fill="#f97583" opacity="0.6"/>
<rect x="71" y="118.2" width="3" height="1.6" fill="#e1e4e8" opacity="0.6"/>
<rect x="74" y="118.2" width="4" height="1.6" fill="#79b8ff" opacity="0.6"/>
<rect x="0" y="122.2" width="5" height="1.6" fill="#f97583" opacity="0.6"/>
<rect x="2" y="124.2" width="26" height="1.6" fill="#6a737d" opacity="0.2"/>
<rect x="2" y="126.2" width="13" height="1.6" fill="#f97583" opacity="0.6"/>
<rect x="5" y="128.2" width="10" height="1.6" fill="#f97583" opacity="0.6"/>
<rect x="16" y="128.2" width="11" height="1.6" fill="#79b8ff" opacity="0.6"/>
<rect x="27" y="128.2" width="6" height="1.6" fill="#e1e4e8" opacity="0.6"/>
<rect x="5" y="130.2" width="2" height="1.6" fill="#f97583" opacity="0.6"/>
<rect x="7" y="130.2" width="6" height="1.6" fill="#e1e4e8" opacity="0.6"/>
<rect x="13" y="130.2" width="1" height="1.6" fill="#f97583" opacity="0.6"/>
<rect x="14" y="130.2" width="1" height="1.6" fill="#79b8ff" opacity="0.6"/>
<rect x="15" y="130.2" width="1" height="1.6" fill="#e1e4e8" opacity="0.6"/>
<rect x="17" y="130.2" width="4" height="1.6" fill="#f97583" opacity="0.6"/>
<rect x="22" y="130.2" width="5" height="1.6" fill="#e1e4e8" opacity="0.6"/>
<rect x="28" y="130.2" width="2" height="1.6" fill="#f97583" opacity="0.6"/>
<rect x="31" y="130.2" width="5" height="1.6" fill="#e1e4e8" opacity="0.6"/>
<rect x="36" y="130.2" width="1" height="1.6" fill="#f97583" opacity="0.6"/>
<rect x="37" y="130.2" width="1" height="1.6" fill="#79b8ff" opacity="0.6"/>
<rect x="38" y="130.2" width="1" height="1.6" fill="#e1e4e8" opacity="0.6"/>
<rect x="5" y="132.2" width="4" height="1.6" fill="#f97583" opacity="0.6"/>
<rect x="22" y="132.2" width="5" height="1.6" fill="#e1e4e8" opacity="0.6"/>
<rect x="28" y="132.2" width="2" height="1.6" fill="#f97583" opacity="0.6"/>
<rect x="31" y="132.2" width="12" height="1.6" fill="#e1e4e8" opacity="0.6"/>
<rect x="5" y="134.2" width="6" height="1.6" fill="#f97583" opacity="0.6"/>
<rect x="11" y="134.2" width="1" height="1.6" fill="#e1e4e8" opacity="0.6"/>
<rect x="5" y="136.2" width="10" height="1.6" fill="#e1e4e8" opacity="0.6"/>
<rect x="16" y="136.2" width="2" height="1.6" fill="#f97583" opacity="0.6"/>
<rect x="19" y="136.2" width="7" height="1.6" fill="#e1e4e8" opacity="0.6"/>
<rect x="5" y="138.2" width="4" height="1.6" fill="#f97583" opacity="0.6"/>
<rect x="10" y="138.2" width="10" height="1.6" fill="#e1e4e8" opacity="0.6"/>
<rect x="21" y="138.2" width="2" height="1.6" fill="#f97583" opacity="0.6"/>
<rect x="7" y="140.2" width="4" height="1.6" fill="#f97583" opacity="0.6"/>
<rect x="12" y="140.2" width="7" height="1.6" fill="#e1e4e8" opacity="0.6"/>
<rect x="20" y="140.2" width="2" height="1.6" fill="#f97583" opacity="0.6"/>
<rect x="13" y="142.2" width="2" height="1.6" fill="#e1e4e8" opacity="0.6"/>
<rect x="25" y="142.2" width="2" height="1.6" fill="#f97583" opacity="0.6"/>
<rect x="28" y="142.2" width="3" height="1.6" fill="#79b8ff" opacity="0.6"/>
<rect x="31" y="142.2" width="1" height="1.6" fill="#e1e4e8" opacity="0.6"/>
<rect x="33" y="142.2" width="24" height="1.6" fill="#6a737d" opacity="0.32"/>
<rect x="13" y="144.2" width="7" height="1.6" fill="#e1e4e8" opacity="0.6"/>
<rect x="25" y="144.2" width="2" height="1.6" fill="#f97583" opacity="0.6"/>
<rect x="28" y="144.2" width="3" height="1.6" fill="#79b8ff" opacity="0.6"/>
<rect x="31" y="144.2" width="1" height="1.6" fill="#e1e4e8" opacity="0.6"/>
<rect x="13" y="146.2" width="10" height="1.6" fill="#e1e4e8" opacity="0.6"/>
<rect x="25" y="146.2" width="2" height="1.6" fill="#f97583" opacity="0.6"/>
<rect x="28" y="146.2" width="7" height="1.6" fill="#e1e4e8" opacity="0.6"/>
<rect x="13" y="148.2" width="6" height="1.6" fill="#e1e4e8" opacity="0.6"/>
<rect x="25" y="148.2" width="2" height="1.6" fill="#f97583" opacity="0.6"/>
<rect x="28" y="148.2" width="3" height="1.6" fill="#79b8ff" opacity="0.6"/>
<rect x="31" y="148.2" width="1" height="1.6" fill="#e1e4e8" opacity="0.6"/>
<rect x="33" y="148.2" width="14" height="1.6" fill="#6a737d" opacity="0.32"/>
<rect x="13" y="150.2" width="2" height="1.6" fill="#f97583" opacity="0.6"/>
<rect x="15" y="150.2" width="9" height="1.6" fill="#e1e4e8" opacity="0.6"/>
<rect x="25" y="150.2" width="1" height="1.6" fill="#f97583" opacity="0.6"/>
<rect x="27" y="150.2" width="3" height="1.6" fill="#79b8ff" opacity="0.6"/>
<rect x="30" y="150.2" width="1" height="1.6" fill="#e1e4e8" opacity="0.6"/>
<rect x="32" y="150.2" width="4" height="1.6" fill="#f97583" opacity="0.6"/>
<rect x="16" y="152.2" width="10" height="1.6" fill="#e1e4e8" opacity="0.6"/>
<rect x="27" y="152.2" width="2" height="1.6" fill="#f97583" opacity="0.6"/>
<rect x="30" y="152.2" width="13" height="1.6" fill="#e1e4e8" opacity="0.6"/>
<rect x="16" y="154.2" width="2" height="1.6" fill="#e1e4e8" opacity="0.6"/>
<rect x="22" y="154.2" width="2" height="1.6" fill="#f97583" opacity="0.6"/>
<rect x="25" y="154.2" width="3" height="1.6" fill="#79b8ff" opacity="0.6"/>
<rect x="28" y="154.2" width="1" height="1.6" fill="#e1e4e8" opacity="0.6"/>
<rect x="16" y="156.2" width="5" height="1.6" fill="#e1e4e8" opacity="0.6"/>
<rect x="22" y="156.2" width="2" height="1.6" fill="#f97583" opacity="0.6"/>
<rect x="25" y="156.2" width="12" height="1.6" fill="#e1e4e8" opacity="0.6"/>
<rect x="13" y="158.2" width="6" height="1.6" fill="#f97583" opacity="0.6"/>
<rect x="19" y="158.2" width="1" height="1.6" fill="#e1e4e8" opacity="0.6"/>
<rect x="7" y="162.2" width="4" height="1.6" fill="#f97583" opacity="0.6"/>
<rect x="12" y="162.2" width="12" height="1.6" fill="#e1e4e8" opacity="0.6"/>
<rect x="25" y="162.2" width="2" height="1.6" fill="#f97583" opacity="0.6"/>
<rect x="29" y="162.2" width="31" height="1.6" fill="#6a737d" opacity="0.2"/>
<rect x="13" y="164.2" width="2" height="1.6" fill="#e1e4e8" opacity="0.6"/>
<rect x="16" y="164.2" width="2" height="1.6" fill="#f97583" opacity="0.6"/>
<rect x="19" y="164.2" width="3" height="1.6" fill="#79b8ff" opacity="0.6"/>
<rect x="22" y="164.2" width="1" height="1.6" fill="#e1e4e8" opacity="0.6"/>
<rect x="13" y="166.2" width="2" height="1.6" fill="#f97583" opacity="0.6"/>
<rect x="16" y="166.2" width="6" height="1.6" fill="#e1e4e8" opacity="0.6"/>
<rect x="22" y="166.2" width="1" height="1.6" fill="#f97583" opacity="0.6"/>
<rect x="23" y="166.2" width="1" height="1.6" fill="#79b8ff" opacity="0.6"/>
<rect x="24" y="166.2" width="1" height="1.6" fill="#e1e4e8" opacity="0.6"/>
<rect x="26" y="166.2" width="4" height="1.6" fill="#f97583" opacity="0.6"/>
<rect x="31" y="166.2" width="8" height="1.6" fill="#6a737d" opacity="0.32"/>
<rect x="16" y="168.2" width="6" height="1.6" fill="#e1e4e8" opacity="0.6"/>
<rect x="23" y="168.2" width="6" height="1.6" fill="#f97583" opacity="0.6"/>
<rect x="30" y="168.2" width="7" height="1.6" fill="#e1e4e8" opacity="0.6"/>
<rect x="16" y="170.2" width="2" height="1.6" fill="#f97583" opacity="0.6"/>
<rect x="19" y="170.2" width="11" height="1.6" fill="#e1e4e8" opacity="0.6"/>
<rect x="30" y="170.2" width="1" height="1.6" fill="#f97583" opacity="0.6"/>
<rect x="31" y="170.2" width="1" height="1.6" fill="#79b8ff" opacity="0.6"/>
<rect x="32" y="170.2" width="1" height="1.6" fill="#e1e4e8" opacity="0.6"/>
<rect x="34" y="170.2" width="4" height="1.6" fill="#f97583" opacity="0.6"/>
<rect x="39" y="170.2" width="41" height="1.6" fill="#6a737d" opacity="0.2"/>
<rect x="19" y="172.2" width="6" height="1.6" fill="#e1e4e8" opacity="0.6"/>
<rect x="30" y="172.2" width="2" height="1.6" fill="#f97583" opacity="0.6"/>
<rect x="33" y="172.2" width="3" height="1.6" fill="#79b8ff" opacity="0.6"/>
<rect x="36" y="172.2" width="1" height="1.6" fill="#e1e4e8" opacity="0.6"/>
<rect x="38" y="172.2" width="14" height="1.6" fill="#6a737d" opacity="0.32"/>
<rect x="19" y="174.2" width="10" height="1.6" fill="#e1e4e8" opacity="0.6"/>
<rect x="30" y="174.2" width="2" height="1.6" fill="#f97583" opacity="0.6"/>
<rect x="33" y="174.2" width="8" height="1.6" fill="#e1e4e8" opacity="0.6"/>
<rect x="16" y="176.2" width="6" height="1.6" fill="#f97583" opacity="0.6"/>
<rect x="22" y="176.2" width="1" height="1.6" fill="#e1e4e8" opacity="0.6"/>
<rect x="16" y="178.2" width="2" height="1.6" fill="#f97583" opacity="0.6"/>
<rect x="18" y="178.2" width="9" height="1.6" fill="#e1e4e8" opacity="0.6"/>
<rect x="27" y="178.2" width="3" height="1.6" fill="#79b8ff" opacity="0.6"/>
<rect x="31" y="178.2" width="4" height="1.6" fill="#f97583" opacity="0.6"/>
<rect x="37" y="178.2" width="14" height="1.6" fill="#6a737d" opacity="0.32"/>
<rect x="19" y="180.2" width="10" height="1.6" fill="#e1e4e8" opacity="0.6"/>
<rect x="30" y="180.2" width="2" height="1.6" fill="#f97583" opacity="0.6"/>
<rect x="33" y="180.2" width="10" height="1.6" fill="#e1e4e8" opacity="0.6"/>
<rect x="43" y="180.2" width="1" height="1.6" fill="#f97583" opacity="0.6"/>
<rect x="44" y="180.2" width="1" height="1.6" fill="#79b8ff" opacity="0.6"/>
<rect x="45" y="180.2" width="1" height="1.6" fill="#e1e4e8" opacity="0.6"/>
<rect x="16" y="182.2" width="6" height="1.6" fill="#f97583" opacity="0.6"/>
<rect x="22" y="182.2" width="1" height="1.6" fill="#e1e4e8" opacity="0.6"/>
<rect x="13" y="184.2" width="6" height="1.6" fill="#f97583" opacity="0.6"/>
<rect x="19" y="184.2" width="1" height="1.6" fill="#e1e4e8" opacity="0.6"/>
<rect x="7" y="188.2" width="4" height="1.6" fill="#f97583" opacity="0.6"/>
<rect x="12" y="188.2" width="7" height="1.6" fill="#e1e4e8" opacity="0.6"/>
<rect x="20" y="188.2" width="2" height="1.6" fill="#f97583" opacity="0.6"/>
<rect x="13" y="190.2" width="2" height="1.6" fill="#e1e4e8" opacity="0.6"/>
<rect x="21" y="190.2" width="2" height="1.6" fill="#f97583" opacity="0.6"/>
<rect x="24" y="190.2" width="3" height="1.6" fill="#79b8ff" opacity="0.6"/>
<rect x="27" y="190.2" width="1" height="1.6" fill="#e1e4e8" opacity="0.6"/>
<rect x="29" y="190.2" width="23" height="1.6" fill="#6a737d" opacity="0.32"/>
<rect x="13" y="192.2" width="7" height="1.6" fill="#e1e4e8" opacity="0.6"/>
<rect x="21" y="192.2" width="2" height="1.6" fill="#f97583" opacity="0.6"/>
<rect x="24" y="192.2" width="3" height="1.6" fill="#79b8ff" opacity="0.6"/>
<rect x="27" y="192.2" width="1" height="1.6" fill="#e1e4e8" opacity="0.6"/>
<rect x="13" y="194.2" width="2" height="1.6" fill="#f97583" opacity="0.6"/>
<rect x="15" y="194.2" width="9" height="1.6" fill="#e1e4e8" opacity="0.6"/>
<rect x="25" y="194.2" width="1" height="1.6" fill="#f97583" opacity="0.6"/>
<rect x="27" y="194.2" width="3" height="1.6" fill="#79b8ff" opacity="0.6"/>
<rect x="30" y="194.2" width="1" height="1.6" fill="#e1e4e8" opacity="0.6"/>
<rect x="32" y="194.2" width="4" height="1.6" fill="#f97583" opacity="0.6"/>
<rect x="37" y="194.2" width="46" height="1.6" fill="#6a737d" opacity="0.2"/>
<rect x="15" y="196.2" width="10" height="1.6" fill="#e1e4e8" opacity="0.6"/>
<rect x="26" y="196.2" width="2" height="1.6" fill="#f97583" opacity="0.6"/>
<rect x="29" y="196.2" width="8" height="1.6" fill="#e1e4e8" opacity="0.6"/>
<rect x="13" y="198.2" width="6" height="1.6" fill="#f97583" opacity="0.6"/>
<rect x="19" y="198.2" width="1" height="1.6" fill="#e1e4e8" opacity="0.6"/>
<rect x="5" y="200.2" width="8" height="1.6" fill="#f97583" opacity="0.6"/>
<rect x="13" y="200.2" width="1" height="1.6" fill="#e1e4e8" opacity="0.6"/>
<rect x="2" y="202.2" width="11" height="1.6" fill="#f97583" opacity="0.6"/>
<rect x="13" y="202.2" width="1" height="1.6" fill="#e1e4e8" opacity="0.6"/>
<rect x="2" y="206.2" width="34" height="1.6" fill="#6a737d" opacity="0.2"/>
<rect x="2" y="208.2" width="13" height="1.6" fill="#f97583" opacity="0.6"/>
<rect x="5" y="210.2" width="10" height="1.6" fill="#f97583" opacity="0.6"/>
<rect x="16" y="210.2" width="11" height="1.6" fill="#79b8ff" opacity="0.6"/>
<rect x="27" y="210.2" width="6" height="1.6" fill="#e1e4e8" opacity="0.6"/>
<rect x="5" y="212.2" width="2" height="1.6" fill="#f97583" opacity="0.6"/>
<rect x="8" y="212.2" width="9" height="1.6" fill="#e1e4e8" opacity="0.6"/>
<rect x="17" y="212.2" width="2" height="1.6" fill="#79b8ff" opacity="0.6"/>
<rect x="20" y="212.2" width="3" height="1.6" fill="#f97583" opacity="0.6"/>
<rect x="25" y="212.2" width="12" height="1.6" fill="#e1e4e8" opacity="0.6"/>
<rect x="37" y="212.2" width="3" height="1.6" fill="#79b8ff" opacity="0.6"/>
<rect x="41" y="212.2" width="4" height="1.6" fill="#f97583" opacity="0.6"/>
<rect x="46" y="212.2" width="14" height="1.6" fill="#6a737d" opacity="0.32"/>
<rect x="8" y="214.2" width="6" height="1.6" fill="#e1e4e8" opacity="0.6"/>
<rect x="15" y="214.2" width="2" height="1.6" fill="#f97583" opacity="0.6"/>
<rect x="18" y="214.2" width="13" height="1.6" fill="#e1e4e8" opacity="0.6"/>
<rect x="31" y="214.2" width="1" height="1.6" fill="#79b8ff" opacity="0.6"/>
<rect x="32" y="214.2" width="4" height="1.6" fill="#e1e4e8" opacity="0.6"/>
<rect x="36" y="214.2" width="1" height="1.6" fill="#f97583" opacity="0.6"/>
<rect x="37" y="214.2" width="1" height="1.6" fill="#79b8ff" opacity="0.6"/>
<rect x="39" y="214.2" width="6" height="1.6" fill="#f97583" opacity="0.6"/>
<rect x="46" y="214.2" width="1" height="1.6" fill="#79b8ff" opacity="0.6"/>
<rect x="47" y="214.2" width="1" height="1.6" fill="#e1e4e8" opacity="0.6"/>
<rect x="49" y="214.2" width="1" height="1.6" fill="#f97583" opacity="0.6"/>
<rect x="51" y="214.2" width="5" height="1.6" fill="#e1e4e8" opacity="0.6"/>
<rect x="5" y="216.2" width="6" height="1.6" fill="#f97583" opacity="0.6"/>
<rect x="11" y="216.2" width="1" height="1.6" fill="#e1e4e8" opacity="0.6"/>
<rect x="2" y="218.2" width="11" height="1.6" fill="#f97583" opacity="0.6"/>
<rect x="13" y="218.2" width="1" height="1.6" fill="#e1e4e8" opacity="0.6"/>
<rect x="2" y="222.2" width="33" height="1.6" fill="#6a737d" opacity="0.2"/>
<rect x="2" y="224.2" width="13" height="1.6" fill="#f97583" opacity="0.6"/>
<rect x="5" y="226.2" width="10" height="1.6" fill="#f97583" opacity="0.6"/>
<rect x="16" y="226.2" width="11" height="1.6" fill="#79b8ff" opacity="0.6"/>
<rect x="27" y="226.2" width="6" height="1.6" fill="#e1e4e8" opacity="0.6"/>
<rect x="5" y="228.2" width="2" height="1.6" fill="#f97583" opacity="0.6"/>
<rect x="8" y="228.2" width="11" height="1.6" fill="#e1e4e8" opacity="0.6"/>
<rect x="19" y="228.2" width="1" height="1.6" fill="#f97583" opacity="0.6"/>
<rect x="20" y="228.2" width="8" height="1.6" fill="#e1e4e8" opacity="0.6"/>
<rect x="29" y="228.2" width="4" height="1.6" fill="#f97583" opacity="0.6"/>
<rect x="36" y="228.2" width="33" height="1.6" fill="#6a737d" opacity="0.2"/>
<rect x="8" y="230.2" width="6" height="1.6" fill="#e1e4e8" opacity="0.6"/>
<rect x="15" y="230.2" width="2" height="1.6" fill="#f97583" opacity="0.6"/>
<rect x="18" y="230.2" width="8" height="1.6" fill="#e1e4e8" opacity="0.6"/>
<rect x="5" y="232.2" width="6" height="1.6" fill="#f97583" opacity="0.6"/>
<rect x="11" y="232.2" width="1" height="1.6" fill="#e1e4e8" opacity="0.6"/>
<rect x="5" y="234.2" width="2" height="1.6" fill="#f97583" opacity="0.6"/>
<rect x="8" y="234.2" width="9" height="1.6" fill="#e1e4e8" opacity="0.6"/>
<rect x="17" y="234.2" width="2" height="1.6" fill="#79b8ff" opacity="0.6"/>
<rect x="20" y="234.2" width="3" height="1.6" fill="#f97583" opacity="0.6"/>
<rect x="25" y="234.2" width="12" height="1.6" fill="#e1e4e8" opacity="0.6"/>
<rect x="37" y="234.2" width="3" height="1.6" fill="#79b8ff" opacity="0.6"/>
<rect x="41" y="234.2" width="4" height="1.6" fill="#f97583" opacity="0.6"/>
<rect x="46" y="234.2" width="14" height="1.6" fill="#6a737d" opacity="0.32"/>
<rect x="8" y="236.2" width="6" height="1.6" fill="#e1e4e8" opacity="0.6"/>
<rect x="15" y="236.2" width="2" height="1.6" fill="#f97583" opacity="0.6"/>
<rect x="18" y="236.2" width="13" height="1.6" fill="#e1e4e8" opacity="0.6"/>
<rect x="31" y="236.2" width="1" height="1.6" fill="#79b8ff" opacity="0.6"/>
<rect x="32" y="236.2" width="4" height="1.6" fill="#e1e4e8" opacity="0.6"/>
<rect x="36" y="236.2" width="1" height="1.6" fill="#f97583" opacity="0.6"/>
<rect x="37" y="236.2" width="1" height="1.6" fill="#79b8ff" opacity="0.6"/>
<rect x="39" y="236.2" width="6" height="1.6" fill="#f97583" opacity="0.6"/>
<rect x="46" y="236.2" width="1" height="1.6" fill="#79b8ff" opacity="0.6"/>
<rect x="47" y="236.2" width="1" height="1.6" fill="#e1e4e8" opacity="0.6"/>
<rect x="49" y="236.2" width="1" height="1.6" fill="#f97583" opacity="0.6"/>
<rect x="51" y="236.2" width="7" height="1.6" fill="#e1e4e8" opacity="0.6"/>
<rect x="58" y="236.2" width="1" height="1.6" fill="#79b8ff" opacity="0.6"/>
<rect x="59" y="236.2" width="2" height="1.6" fill="#e1e4e8" opacity="0.6"/>
<rect x="5" y="238.2" width="6" height="1.6" fill="#f97583" opacity="0.6"/>
<rect x="11" y="238.2" width="1" height="1.6" fill="#e1e4e8" opacity="0.6"/>
<rect x="2" y="240.2" width="11" height="1.6" fill="#f97583" opacity="0.6"/>
<rect x="13" y="240.2" width="1" height="1.6" fill="#e1e4e8" opacity="0.6"/>
<rect x="2" y="244.2" width="4" height="1.6" fill="#e1e4e8" opacity="0.6"/>
<rect x="10" y="244.2" width="2" height="1.6" fill="#f97583" opacity="0.6"/>
<rect x="13" y="244.2" width="7" height="1.6" fill="#e1e4e8" opacity="0.6"/>
<rect x="2" y="246.2" width="4" height="1.6" fill="#e1e4e8" opacity="0.6"/>
<rect x="10" y="246.2" width="2" height="1.6" fill="#f97583" opacity="0.6"/>
<rect x="13" y="246.2" width="13" height="1.6" fill="#e1e4e8" opacity="0.6"/>
<rect x="26" y="246.2" width="1" height="1.6" fill="#79b8ff" opacity="0.6"/>
<rect x="27" y="246.2" width="6" height="1.6" fill="#e1e4e8" opacity="0.6"/>
<rect x="2" y="248.2" width="7" height="1.6" fill="#e1e4e8" opacity="0.6"/>
<rect x="10" y="248.2" width="2" height="1.6" fill="#f97583" opacity="0.6"/>
<rect x="13" y="248.2" width="7" height="1.6" fill="#e1e4e8" opacity="0.6"/>
<rect x="0" y="250.2" width="3" height="1.6" fill="#f97583" opacity="0.6"/>
<rect x="4" y="250.2" width="11" height="1.6" fill="#e1e4e8" opacity="0.6"/>
</svg>
      </div>
      <div id="vscroll"><div class="abs" style="left:0;top:20px;width:13px;height:3px;background:#8fa0b5"></div></div>
    </div>
  </div>
  <div id="g2">
    <div class="tabs">
      <div class="tab" style="left:0;width:198.2px;color:#959da5">
<svg class="abs" viewBox="0 0 16 16" style="left:9.7px;top:9.5px;width:15px;height:15px" fill="none" stroke="#2188ff" stroke-width="1.5" stroke-linejoin="round"><path d="M3.5 1.8h6l3.5 3.5v9h-9.5z"/><path d="M9 2v4h4"/></svg><span class="abs t" style="left:31.2px;top:9.5px;font-size:13.00px;letter-spacing:0.324px;color:#959da5;">Module documentation</span><svg class="abs" viewBox="0 0 10 10" style="left:177.7px;top:12.5px;width:10px;height:10px" stroke="#959da5" stroke-width="1.1" fill="none"><path d="M1.2 1.2l7.6 7.6M8.8 1.2l-7.6 7.6"/></svg>
      </div>
<svg class="abs" viewBox="0 0 16 16" style="left:901.2px;top:9.5px;width:16px;height:16px"><circle cx="3.5" cy="8" r="1" fill="#c9ced4"/><circle cx="8" cy="8" r="1" fill="#c9ced4"/><circle cx="12.5" cy="8" r="1" fill="#c9ced4"/></svg>
    </div>
    <div id="webview">
      <div id="toolbar">
        <span style="left:221.2px">Export markdown</span><span style="left:347.2px">Export PDF</span><span style="left:473.2px">Export HTML</span><span style="left:599.2px">Export image</span>
      </div>
      <div class="abs" style="left:925.2px;top:71px;width:10px;height:656px;background:#dcdde0"></div>
      <div class="abs" style="left:925.2px;top:964px;width:10px;height:10px;background:#24292e"></div>
      <div class="abs" style="left:0;top:964px;width:323.5px;height:10px;background:#dcdde0"></div>
    </div>
  </div>
  <div id="status">
<div class="abs" style="left:0;top:-1px;width:34px;height:22px;background:#0366d6"></div>
<svg class="abs" viewBox="0 0 16 16" style="left:9px;top:1.8px;width:16px;height:16px" fill="none" stroke="#fff" stroke-width="1.2"><path d="M10.5 2.5l-4 4 4 0M5.5 13.5l4-4-4 0" stroke-linejoin="miter"/><path d="M11.5 3l-7 10" stroke-width="0.9"/></svg>
<svg class="abs" viewBox="0 0 16 16" style="left:40.5px;top:1.8px;width:16px;height:16px" fill="none" stroke="#d1d5da" stroke-width="1.1"><circle cx="8" cy="8" r="6"/><path d="M5.7 5.7l4.6 4.6M10.3 5.7l-4.6 4.6"/></svg>
<span class="abs t" style="left:58.5px;top:1.7px;font-size:12.60px;">0</span>
<svg class="abs" viewBox="0 0 16 16" style="left:66.5px;top:1.8px;width:16px;height:16px" fill="none" stroke="#d1d5da" stroke-width="1.1" stroke-linejoin="round"><path d="M8 2.5l6 11h-12z"/><path d="M8 6.5v3.8M8 11.3v1.2"/></svg>
<span class="abs t" style="left:84.5px;top:1.7px;font-size:12.60px;">0</span>
<span class="abs t" style="left:1593.0px;top:1.7px;font-size:12.60px;letter-spacing:-0.453px;">Ln 5, Col 26</span>
<span class="abs t" style="left:1671.3px;top:1.7px;font-size:12.60px;letter-spacing:-0.670px;">Spaces: 3</span>
<span class="abs t" style="left:1738.0px;top:1.7px;font-size:12.60px;letter-spacing:-0.839px;">UTF-8</span>
<span class="abs t" style="left:1785.2px;top:1.7px;font-size:12.60px;letter-spacing:-1.101px;">LF</span>
<span class="abs t" style="left:1814.4px;top:1.7px;font-size:12.60px;letter-spacing:-0.828px;">VHDL</span>
<svg class="abs" viewBox="0 0 16 16" style="left:1859.5px;top:1.8px;width:16px;height:16px" fill="none" stroke="#d1d5da" stroke-width="1.1" stroke-linejoin="round"><path d="M5 2.5h9.5v7h-4l-2.5 2.5v-2.5"/><circle cx="5" cy="7" r="2"/><path d="M1.5 14c.3-2.5 1.7-3.7 3.5-3.7s3.200 1.2 3.500 3.700"/></svg>
<svg class="abs" viewBox="0 0 16 16" style="left:1892px;top:1.8px;width:16px;height:16px" fill="none" stroke="#d1d5da" stroke-width="1.1" stroke-linejoin="round"><path d="M3 12h10l-1.500-2v-3.500c0-2.500-1.500-4-3.500-4s-3.500 1.500-3.500 4v3.500z"/><path d="M6.800 13.500c.3.700 2.100.700 2.400 0"/></svg>
  </div>
</div>
<div id="ov">
<svg width="1080" height="597" viewBox="0 0 1080 597" style="position:absolute;left:0;top:0" font-family="'Liberation Sans','DejaVu Sans',sans-serif">
<defs><clipPath id="wv"><rect x="553.5" y="58" width="515.8" height="516"/></clipPath><pattern id="hatch" width="1.7" height="1.7" patternUnits="userSpaceOnUse" patternTransform="rotate(45)"><rect width="1.7" height="1.7" fill="#fff"/><rect width="0.45" height="1.7" fill="#808080"/></pattern></defs>
<g clip-path="url(#wv)">
<text x="578.4" y="73.1" font-size="10.90" font-weight="bold" letter-spacing="-0.116" fill="#000">Diagram</text>
<text x="578.6" y="247.4" font-size="10.90" font-weight="bold" letter-spacing="0.004" fill="#000">Description</text>
<text x="578.6" y="283.2" font-size="7.25" fill="#000"><tspan font-weight="bold">Wavedrom</tspan> example:</text>
<text x="578.1" y="551.7" font-size="10.90" font-weight="bold" letter-spacing="-0.130" fill="#000">Generics and ports</text>
<text x="578.1" y="571.4" font-size="7.90" font-weight="bold" letter-spacing="0.204" fill="#000">Table 1.1 Generics</text>
<g font-size="8.19" fill="#000">
<rect x="825.6" y="102.45" width="162.8" height="37.3" fill="#bdecb6" stroke="#000" stroke-width="1.3"/>
<rect x="825.6" y="144.3" width="162.8" height="60.4" fill="#fdfd96" stroke="#000" stroke-width="1.3"/>
<path d="M816.6 109.9H825.6" stroke="#000" stroke-width="2.5"/>
<text x="813.5" y="117.0" text-anchor="end">integer</text>
<text x="833.1" y="117.0">quarz_taktfrequenz</text>
<path d="M816.6 121.1H825.6" stroke="#000" stroke-width="2.5"/>
<text x="813.5" y="128.2" text-anchor="end">integer</text>
<text x="833.1" y="128.2">spi_taktfrequenz</text>
<path d="M816.6 132.2H825.6" stroke="#000" stroke-width="2.5"/>
<text x="813.5" y="139.3" text-anchor="end">integer</text>
<text x="833.1" y="139.3">laenge</text>
<path d="M816.6 152.6H825.6" stroke="#000" stroke-width="2.5"/>
<text x="813.5" y="159.3" text-anchor="end">std_logic_vector (laenge-1 downto 0)</text>
<text x="833.1" y="159.3">tx_data</text>
<path d="M816.6 163.8H825.6" stroke="#000" stroke-width="2.5"/>
<text x="813.5" y="170.5" text-anchor="end">std_logic</text>
<text x="833.1" y="170.5">miso</text>
<path d="M816.6 174.9H825.6" stroke="#000" stroke-width="2.5"/>
<text x="813.5" y="181.6" text-anchor="end">std_logic</text>
<text x="833.1" y="181.6">tx_start</text>
<path d="M816.6 186.1H825.6" stroke="#000" stroke-width="2.5"/>
<text x="813.5" y="192.8" text-anchor="end">std_logic</text>
<text x="833.1" y="192.8">clk</text>
<path d="M988.4 152.6H997.2" stroke="#000" stroke-width="2.5"/>
<text x="980.5" y="159.3" text-anchor="end">rx_data</text>
<text x="999.6" y="159.3">std_logic_vector (laenge-1 downto 0)</text>
<path d="M988.4 163.8H997.2" stroke="#000" stroke-width="2.5"/>
<text x="980.5" y="170.5" text-anchor="end">mosi</text>
<text x="999.6" y="170.5">std_logic</text>
<path d="M988.4 174.9H997.2" stroke="#000" stroke-width="2.5"/>
<text x="980.5" y="181.6" text-anchor="end">sclk</text>
<text x="999.6" y="181.6">std_logic</text>
<path d="M988.4 186.1H997.2" stroke="#000" stroke-width="2.5"/>
<text x="980.5" y="192.8" text-anchor="end">ss</text>
<text x="999.6" y="192.8">std_logic</text>
<path d="M988.4 197.3H997.2" stroke="#000" stroke-width="2.5"/>
<text x="980.5" y="204.0" text-anchor="end">tx_done</text>
<text x="999.6" y="204.0">std_logic</text>
<path d="M825.6 139.75H988.4" stroke="#000" stroke-width="1.3"/>
<path d="M825.6 204.7H988.4" stroke="#000" stroke-width="1.3"/>
</g>
<g fill="none">
<g stroke="#999" stroke-width="0.4" stroke-dasharray="0.6 1.7">
<path d="M668.30 348V513.5"/>
<path d="M690.63 348V513.5"/>
<path d="M712.96 348V513.5"/>
<path d="M735.29 348V513.5"/>
<path d="M757.62 348V513.5"/>
<path d="M779.95 348V513.5"/>
<path d="M802.28 348V513.5"/>
<path d="M824.61 348V513.5"/>
<path d="M846.94 348V513.5"/>
<path d="M869.27 348V513.5"/>
<path d="M891.60 348V513.5"/>
<path d="M913.93 348V513.5"/>
<path d="M936.26 348V513.5"/>
<path d="M958.59 348V513.5"/>
<path d="M980.92 348V513.5"/>
<path d="M1003.25 348V513.5"/>
<path d="M1025.58 348V513.5"/>
<path d="M1047.91 348V513.5"/>
<path d="M1070.24 348V513.5"/>
</g>
<g font-size="8.19" fill="#bcbcbc" text-anchor="middle" stroke="none">
<text x="669.00" y="345.5">0</text>
<text x="691.33" y="345.5">1</text>
<text x="713.66" y="345.5">2</text>
<text x="735.99" y="345.5">3</text>
<text x="758.32" y="345.5">4</text>
<text x="780.65" y="345.5">5</text>
<text x="802.98" y="345.5">6</text>
<text x="825.31" y="345.5">7</text>
<text x="847.64" y="345.5">8</text>
<text x="869.97" y="345.5">9</text>
<text x="892.30" y="345.5">10</text>
<text x="914.63" y="345.5">11</text>
<text x="936.96" y="345.5">12</text>
<text x="959.29" y="345.5">13</text>
<text x="981.62" y="345.5">14</text>
<text x="1003.95" y="345.5">15</text>
<text x="1026.28" y="345.5">16</text>
<text x="1048.61" y="345.5">17</text>
<text x="1070.94" y="345.5">18</text>
</g>
<path d="M668.30 378.40V367.23H690.63V378.40H712.96V367.23H735.29V378.40H757.62V367.23H779.95V378.40H802.28V367.23H824.61V378.40H846.94V367.23H869.27V378.40H891.60V367.23H913.93V378.40H936.26V367.23H958.59V378.40H980.92V367.23H1003.25V378.40H1025.58V367.23H1047.91V378.40H1070.24V367.23H1092.57" stroke="#111" stroke-width="0.68"/>
<path d="M668.30 383.95H1070.00" stroke="#111" stroke-width="0.68"/>
<path d="M668.30 395.12H1070.00" stroke="#111" stroke-width="0.68"/>
<path d="M668.30 411.84H1070.00" stroke="#111" stroke-width="0.68"/>
<path d="M668.30 428.56H916.10L919.35 417.39H1070" stroke="#111" stroke-width="0.68"/>
<path d="M668.30 434.11H1070.00" stroke="#111" stroke-width="0.68"/>
<path d="M668.30 445.28H1070.00" stroke="#111" stroke-width="0.68"/>
<path d="M668.30 462.00H1070.00" stroke="#111" stroke-width="0.68"/>
<path d="M668.30 467.55H715.13L718.38 478.72H668.30z" fill="url(#hatch)" stroke="none"/>
<path d="M668.30 467.55H715.13L718.38 478.72H668.30" fill="none" stroke="#111" stroke-width="0.68"/>
<path d="M668.30 495.44H715.13L718.38 484.27H668.30z" fill="url(#hatch)" stroke="none"/>
<path d="M668.30 495.44H715.13L718.38 484.27H668.30" fill="none" stroke="#111" stroke-width="0.68"/>
<path d="M668.30 500.99H715.13L718.38 512.16H668.30z" fill="url(#hatch)" stroke="none"/>
<path d="M668.30 500.99H715.13L718.38 512.16H668.30" fill="none" stroke="#111" stroke-width="0.68"/>
<path d="M718.38 478.72H983.09L986.34 467.55H1070" stroke="#111" stroke-width="0.68"/>
<path d="M718.38 484.27H938.43L941.68 495.44H1070" stroke="#111" stroke-width="0.68"/>
<path d="M718.38 512.16H1070.00" stroke="#111" stroke-width="0.68"/>
<path d="M825.61 365.63C823.61 365.63 823.61 380.00 821.41 380.00H824.01C826.21 380.00 826.21 365.63 828.61 365.63z" fill="#fff" stroke="none"/>
<path d="M825.61 365.63C823.61 365.63 823.61 380.00 821.41 380.00" stroke="#111" stroke-width="0.68"/>
<path d="M828.61 365.63C826.21 365.63 826.21 380.00 824.01 380.00" stroke="#111" stroke-width="0.68"/>
<path d="M959.59 365.63C957.59 365.63 957.59 380.00 955.39 380.00H957.99C960.19 380.00 960.19 365.63 962.59 365.63z" fill="#fff" stroke="none"/>
<path d="M959.59 365.63C957.59 365.63 957.59 380.00 955.39 380.00" stroke="#111" stroke-width="0.68"/>
<path d="M962.59 365.63C960.19 365.63 960.19 380.00 957.99 380.00" stroke="#111" stroke-width="0.68"/>
<path d="M1004.25 365.63C1002.25 365.63 1002.25 380.00 1000.05 380.00H1002.65C1004.85 380.00 1004.85 365.63 1007.25 365.63z" fill="#fff" stroke="none"/>
<path d="M1004.25 365.63C1002.25 365.63 1002.25 380.00 1000.05 380.00" stroke="#111" stroke-width="0.68"/>
<path d="M1007.25 365.63C1004.85 365.63 1004.85 380.00 1002.65 380.00" stroke="#111" stroke-width="0.68"/>
</g>
<g font-size="8.19" fill="#0041c4" text-anchor="end">
<text x="663.1" y="376.10">clk</text>
<text x="663.1" y="392.82">TX_Data</text>
<text x="663.1" y="409.54">MISO</text>
<text x="663.1" y="426.26">TX_Start</text>
<text x="663.1" y="442.98">RX_Data</text>
<text x="663.1" y="459.70">MOSI</text>
<text x="663.1" y="476.42">SCLK</text>
<text x="663.1" y="493.14">SS</text>
<text x="663.1" y="509.86">TX_Done</text>
</g>
<g font-size="8.19" fill="#0041c4" text-anchor="middle">
<text transform="translate(615.0 372.85) rotate(-90)">CLK</text>
<path d="M621.4 366.00c-1.7 0-2.8 1.1-2.8 2.8V376.90c0 1.7 1.1 2.8 2.8 2.800" fill="none" stroke="#0041c4" stroke-width="0.56"/>
<text transform="translate(615.0 405.90) rotate(-90)">IN</text>
<path d="M621.4 382.70c-1.7 0-2.8 1.1-2.8 2.8V426.30c0 1.7 1.1 2.8 2.8 2.800" fill="none" stroke="#0041c4" stroke-width="0.56"/>
<text transform="translate(615.0 473.10) rotate(-90)">OUT</text>
<path d="M621.4 433.00c-1.7 0-2.8 1.1-2.8 2.8V510.40c0 1.7 1.1 2.8 2.8 2.800" fill="none" stroke="#0041c4" stroke-width="0.56"/>
</g>
</g>
<path d="M319.50 301.30L627.64 352.50" stroke="#f00" stroke-width="3.6" fill="none"/>
<path d="M637.90 354.20L624.75 357.69L626.59 346.64z" fill="#f00"/>
<path d="M579.7 6L579.7 15.500L581.8 13.700L583.4 16.900L584.800 16.200L583.300 13.100L586.500 12.700Z" fill="#fff" stroke="#333" stroke-width="0.6" stroke-linejoin="round"/>
</svg>
</div>
</body>
</html>
